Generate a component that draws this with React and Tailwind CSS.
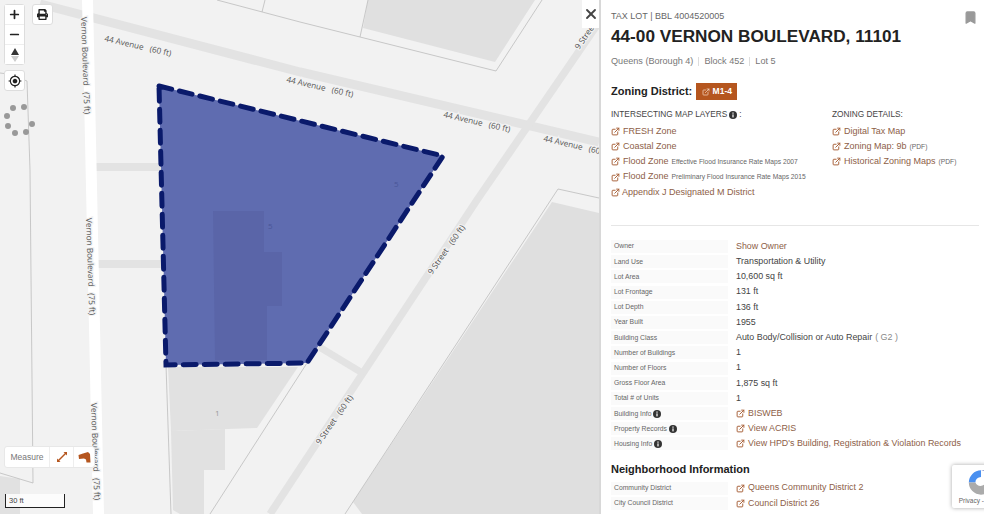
import React from "react";
import { ExternalLink, Bookmark, X, Plus, Minus } from "lucide-react";
import { FaPrint } from "react-icons/fa";
import { MdGpsFixed } from "react-icons/md";

function Road({ points, w = 8 }) {
  return <polyline points={points} fill="none" stroke="#e3e3e3" strokeWidth={w} />;
}
function Line({ points }) {
  return <polyline points={points} fill="none" stroke="#bdbdbd" strokeWidth="0.8" />;
}
function Label({ x, y, a, size = 8.2, children }) {
  return (
    <text
      transform={`translate(${x} ${y}) rotate(${a})`}
      fontFamily="'Open Sans', sans-serif"
      fontSize={size}
      fill="#555"
      stroke="#f2f2f2"
      strokeWidth="2.5"
      paintOrder="stroke"
      xmlSpace="preserve"
    >
      {children}
    </text>
  );
}

function MapCanvas() {
  const dots = [[13, 108], [24, 107], [7, 116], [8, 126], [15, 133], [26, 132], [32, 124]];
  return (
    <svg className="absolute inset-0" width="599" height="514" viewBox="0 0 599 514">
      <rect width="599" height="514" fill="#f2f2f2" />
      <polygon points="368,0 363,28 495,62 535,0" fill="#e0e0e0" />
      <polygon points="552,202 599,213 599,514 362,514 353,502" fill="#dfdfdf" />
      <polygon points="168,367 298,367 257,428 171,431" fill="#e1e1e1" />
      <polygon points="171,431 225,429 225,470 204,470 204,514 180,514 173,510" fill="#e1e1e1" />
      <polygon points="0,476 20,479 20,514 0,514" fill="#e1e1e1" />
      <Road points="40,4 300,72 599,142" w="9" />
      <Road points="599,22 477,200 363,373 270,514" w="7.5" />
      <Road points="96,167 162,167" w="8" />
      <Road points="96,264 162,264" w="8" />
      <Road points="316,345 364,374" w="7" />
      <polygon points="82,0 93,0 104,514 93,514" fill="#ffffff" />
      <Line points="217,0 300,22 360,37 496,71 542,0" />
      <Line points="360,37 368,0" />
      <Line points="265,0 262,12" />
      <Line points="599,198 558,189 345,514" />
      <Line points="307,363 210,514" />
      <Line points="166,365 171,514" />
      <Line points="0,73 8,74 27,81 30,170 33,483 0,473" />
      <Label x={104} y={41} a={13}>44 Avenue   (60 ft)</Label>
      <Label x={286} y={82} a={13}>44 Avenue   (60 ft)</Label>
      <Label x={443} y={117} a={13}>44 Avenue   (60 ft)</Label>
      <Label x={543} y={141} a={13}>44 Avenue   (60 ft)</Label>
      <Label x={81} y={17} a={88}>Vernon Boulevard   (75 ft)</Label>
      <Label x={86} y={218} a={88}>Vernon Boulevard   (75 ft)</Label>
      <Label x={91} y={403} a={88}>Vernon Boulevard   (75 ft)</Label>
      <Label x={432} y={275} a={-55}>9 Street   (60 ft)</Label>
      <Label x={320} y={445} a={-55}>9 Street   (60 ft)</Label>
      <Label x={579} y={50} a={-55}>9 Street   (60 ft)</Label>
      <text x="215" y="416" fontFamily="'Open Sans', sans-serif" fontSize="8" fill="#999">1</text>
      <polygon points="159,86 443,156 307,363 166,365" fill="#5f6cb0" />
      <polygon points="213,211 264,211 264,252 282,252 282,306 267,306 267,360 215,360" fill="#5a65a8" />
      <text x="394" y="187" fontFamily="'Open Sans', sans-serif" fontSize="8" fill="#4a5698">5</text>
      <text x="268" y="229" fontFamily="'Open Sans', sans-serif" fontSize="8" fill="#4a5698">5</text>
      <polygon
        points="159,86 443,156 307,363 166,365"
        fill="none"
        stroke="#0a1a6b"
        strokeWidth="5"
        strokeDasharray="13 8"
        strokeLinecap="round"
      />
      {dots.map(([x, y]) => (
        <circle key={x + "-" + y} cx={x} cy={y} r="3" fill="#999" />
      ))}
    </svg>
  );
}

const btn = "flex items-center justify-center bg-white text-[#222]";

function MapControls() {
  return (
    <>
      <div className="absolute left-[4px] top-[4px] w-[21px] rounded-[3px] border border-[#ddd] bg-white">
        <div className={btn + " h-[20px] border-b border-[#eee]"}><Plus size={13} strokeWidth={3.2} /></div>
        <div className={btn + " h-[20px] border-b border-[#eee]"}><Minus size={13} strokeWidth={3.2} /></div>
        <div className={btn + " h-[19px]"}>
          <svg width="8" height="14" viewBox="0 0 8 14">
            <polygon points="4,0 8,7 0,7" fill="#333" />
            <polygon points="4,14 8,8 0,8" fill="#ccc" />
          </svg>
        </div>
      </div>
      <div className={btn + " absolute left-[32px] top-[4px] h-[21px] w-[21px] rounded-[3px] border border-[#ddd]"}>
        <FaPrint size={11} />
      </div>
      <div className={btn + " absolute left-[4px] top-[70px] h-[21px] w-[21px] rounded-[3px] border border-[#ddd]"}>
        <MdGpsFixed size={14} />
      </div>
      <div className="absolute left-[4px] top-[446px] flex h-[22px] items-center rounded-[3px] border border-[#e8e8e8] bg-white">
        <div className="flex h-full w-[45px] items-center justify-center border-r border-[#eee] text-[8.5px] text-[#777]">Measure</div>
        <div className="flex h-full w-[24px] items-center justify-center border-r border-[#eee]">
          <svg width="12" height="12" viewBox="0 0 12 12" fill="none" stroke="#b5561f" strokeWidth="1.4">
            <path d="M1.5 10.5 L10.5 1.5" />
            <path d="M7.5 1 L11 1 L11 4.5 Z" fill="#b5561f" stroke="none" />
            <path d="M1 7.5 L1 11 L4.5 11 Z" fill="#b5561f" stroke="none" />
          </svg>
        </div>
        <div className="flex h-full w-[20px] items-center justify-center">
          <svg width="13" height="11" viewBox="0 0 13 11">
            <polygon points="0.5,3 1,7 6,6.5 8,7.5 8.5,10.5 12.5,10.5 12,2 10,0 5,1.5" fill="#b5561f" />
          </svg>
        </div>
      </div>
      <div className="absolute left-[5px] top-[494px] flex h-[14px] w-[60px] items-center border-x border-b border-[#222] bg-white/80 pl-[3px] text-[7.5px] text-[#444]">
        30 ft
      </div>
    </>
  );
}

function Ext({ className = "" }) {
  return <ExternalLink size={9} strokeWidth={2.6} className={"shrink-0 text-[#a8623a] " + className} />;
}

function LayerLink({ children, note, gap = "mr-[3px]" }) {
  return (
    <div className="flex h-[15.2px] items-center text-[9px] whitespace-nowrap text-[#8d6047]">
      <Ext className={gap} />
      <span>{children}</span>
      {note && <span className="ml-[3px] text-[6.7px] text-[#666]">{note}</span>}
    </div>
  );
}

function InfoDot() {
  return (
    <svg width="8" height="8" viewBox="0 0 8 8" className="ml-[2px] shrink-0">
      <circle cx="4" cy="4" r="4" fill="#333" />
      <rect x="3.4" y="3.4" width="1.2" height="3" fill="#fff" />
      <rect x="3.4" y="1.5" width="1.2" height="1.2" fill="#fff" />
    </svg>
  );
}

function Row({ label, info, children }) {
  return (
    <div className="flex h-[15.2px] items-center">
      <div className="flex h-[13px] w-[117px] shrink-0 items-center bg-[#fafafa] pl-[3px] text-[6.8px] text-[#666]">
        {label}
        {info && <InfoDot />}
      </div>
      <div className="ml-[8px] flex items-center text-[8.9px] whitespace-nowrap text-[#444]">{children}</div>
    </div>
  );
}

function LinkVal({ children }) {
  return (
    <span className="flex items-center text-[#8d6047]">
      <Ext className="mr-[3px]" />
      {children}
    </span>
  );
}

function Panel() {
  return (
    <div className="relative h-full flex-1 overflow-hidden border-l-2 border-[#d8d8d8] bg-white pl-[10px] pr-[5px]">
      <Bookmark size={15} fill="#999" stroke="#999" className="absolute right-[6px] top-[10px]" />
      <div className="pt-[11px] text-[9px] leading-[11px] text-[#666]">TAX LOT | BBL 4004520005</div>
      <div className="mt-[3px] text-[17.2px] leading-[22px] font-bold whitespace-nowrap text-[#222]">44-00 VERNON BOULEVARD, 11101</div>
      <div className="mt-[8px] flex items-center text-[9.1px] leading-[12px] text-[#777]">
        <span>Queens (Borough 4)</span>
        <span className="mx-[5px] h-[9px] w-px bg-[#ddd]" />
        <span>Block 452</span>
        <span className="mx-[5px] h-[9px] w-px bg-[#ddd]" />
        <span>Lot 5</span>
      </div>
      <div className="mt-[16px] flex items-center">
        <span className="text-[11px] font-bold text-[#222]">Zoning District:</span>
        <span className="ml-[4px] flex h-[17px] w-[41px] items-center justify-center gap-[3px] bg-[#b5561f] text-[8.5px] font-bold text-white">
          <ExternalLink size={8} strokeWidth={2.2} className="text-[#f5d8c4]" />
          M1-4
        </span>
      </div>
      <div className="mt-[8px] flex">
        <div className="w-[221px]">
          <div className="mb-[3px] flex h-[13px] items-center text-[8.3px] text-[#444]">
            INTERSECTING MAP LAYERS
            <InfoDot />
            <span className="ml-[2px]">:</span>
          </div>
          <LayerLink>FRESH Zone</LayerLink>
          <LayerLink>Coastal Zone</LayerLink>
          <LayerLink note="Effective Flood Insurance Rate Maps 2007">Flood Zone</LayerLink>
          <LayerLink note="Preliminary Flood Insurance Rate Maps 2015">Flood Zone</LayerLink>
          <LayerLink gap="mr-[2px]">Appendix J Designated M District</LayerLink>
        </div>
        <div>
          <div className="mb-[3px] flex h-[13px] items-center text-[8.3px] text-[#444]">ZONING DETAILS:</div>
          <LayerLink>Digital Tax Map</LayerLink>
          <LayerLink note="(PDF)">Zoning Map: 9b</LayerLink>
          <LayerLink note="(PDF)">Historical Zoning Maps</LayerLink>
        </div>
      </div>
      <div className="mt-[25px] h-px bg-[#e6e6e6]" />
      <div className="mt-[13px]">
        <Row label="Owner"><span className="text-[#8d6047]">Show Owner</span></Row>
        <Row label="Land Use">Transportation &amp; Utility</Row>
        <Row label="Lot Area">10,600 sq ft</Row>
        <Row label="Lot Frontage">131 ft</Row>
        <Row label="Lot Depth">136 ft</Row>
        <Row label="Year Built">1955</Row>
        <Row label="Building Class">
          Auto Body/Collision or Auto Repair<span className="ml-[3px] text-[#888]">( G2 )</span>
        </Row>
        <Row label="Number of Buildings">1</Row>
        <Row label="Number of Floors">1</Row>
        <Row label="Gross Floor Area">1,875 sq ft</Row>
        <Row label="Total # of Units">1</Row>
        <Row label="Building Info" info><LinkVal>BISWEB</LinkVal></Row>
        <Row label="Property Records" info><LinkVal>View ACRIS</LinkVal></Row>
        <Row label="Housing Info" info><LinkVal>View HPD's Building, Registration &amp; Violation Records</LinkVal></Row>
      </div>
      <div className="mt-[10px] mb-[5px] text-[11px] leading-[14px] font-bold text-[#222]">Neighborhood Information</div>
      <Row label="Community District"><LinkVal>Queens Community District 2</LinkVal></Row>
      <Row label="City Council District"><LinkVal>Council District 26</LinkVal></Row>
      <div className="absolute left-[351px] top-[465px] flex h-[43px] w-[58px] flex-col items-center overflow-hidden rounded-[2px] bg-white shadow-[0_0_4px_rgba(0,0,0,0.35)]">
        <svg width="30" height="29" viewBox="0 0 32 30" className="mt-[3px] shrink-0">
          <path d="M16 2 A13 13 0 0 1 29 15 L23 15 L26 2 Z" fill="#1c3aa9" />
          <path d="M16 2 A13 13 0 0 0 3 15 L10 15 A6 6 0 0 1 16 9 Z" fill="#4a90f0" />
          <path d="M3 15 A13 13 0 0 0 29 15 L21 15 A6 6 0 0 1 10 15 Z" fill="#ababab" />
        </svg>
        <span className="text-[6.5px] leading-[8px] whitespace-nowrap text-[#666]">Privacy - Terms</span>
      </div>
    </div>
  );
}

export default function App() {
  return (
    <div className="flex h-[514px] w-[984px] overflow-hidden bg-white font-['Liberation_Sans',Arial,sans-serif]">
      <div className="relative h-full w-[599px] shrink-0 overflow-hidden">
        <MapCanvas />
        <MapControls />
        <div className="absolute right-0 top-0 flex h-[28px] w-[17px] items-center justify-center bg-white text-[#444]">
          <X size={16} strokeWidth={2.8} />
        </div>
      </div>
      <Panel />
    </div>
  );
}
